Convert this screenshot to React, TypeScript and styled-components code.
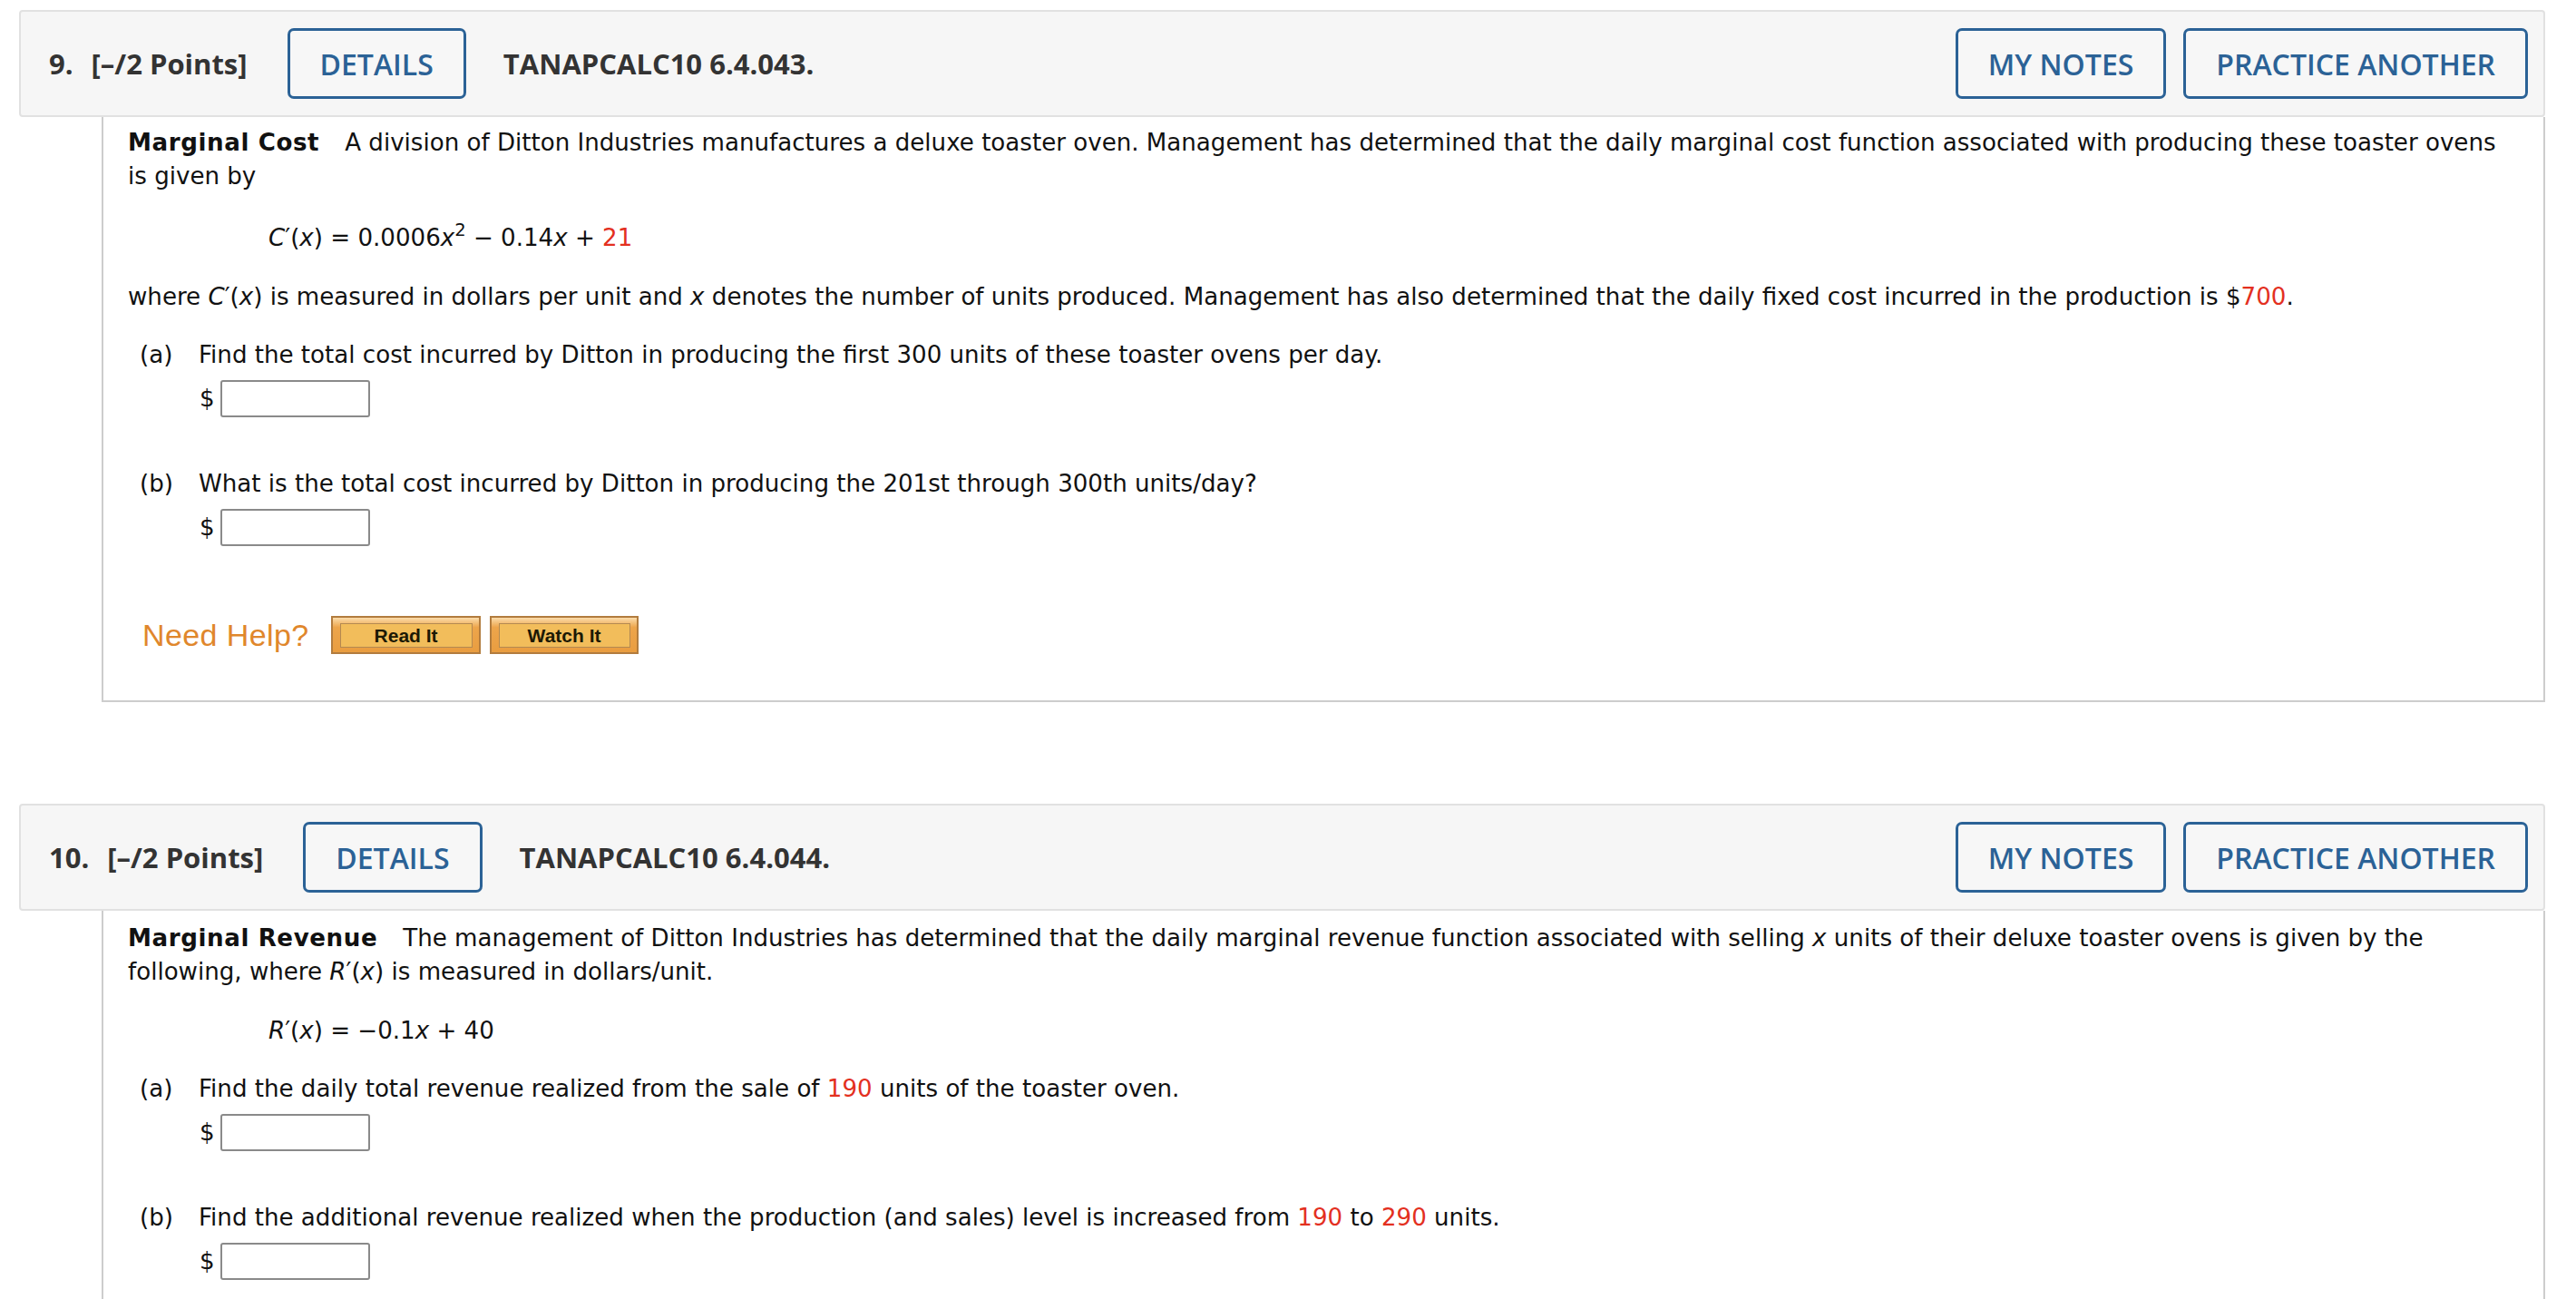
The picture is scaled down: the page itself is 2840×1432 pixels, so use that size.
import React from "react";
import styled, { createGlobalStyle } from "styled-components";

const Global = createGlobalStyle`
  html, body { margin: 0; padding: 0; background: #ffffff; overflow: hidden; }
  body { font-family: "DejaVu Sans", Verdana, sans-serif; color: #111; }
`;

const Page = styled.div`
  padding: 11px 34px 0 21px;
`;

const Question = styled.section`
  margin-bottom: 112px;
`;

const QHeader = styled.header`
  display: flex;
  align-items: center;
  background: #f6f6f6;
  border: 2px solid #e1e1e1;
  border-radius: 4px;
  padding: 18px 17px 18px 31px;
  font-family: "Open Sans", "Liberation Sans", sans-serif;
  font-weight: 700;
  font-size: 31px;
  color: #333;
`;

const QNum = styled.span`
  margin-right: 20px;
`;

const Points = styled.span`
  margin-right: 44px;
`;

const Code = styled.span`
  margin-left: 41px;
  flex: 1;
`;

const OutlineButton = styled.button<{ $ml?: number }>`
  height: 78px;
  padding: 0 33px;
  margin-left: ${(p) => p.$ml ?? 0}px;
  border: 3px solid #2b6296;
  border-radius: 7px;
  background: #f7f7f7;
  color: #2b6296;
  font-family: "Open Sans", "Liberation Sans", sans-serif;
  font-weight: 600;
  font-size: 32px;
  cursor: pointer;
`;

const QBody = styled.div<{ $pb: number }>`
  margin-left: 91px;
  border-left: 2px solid #cdcdcd;
  border-right: 2px solid #cdcdcd;
  border-bottom: 2px solid #cdcdcd;
  padding: 10px 36px ${(p) => p.$pb}px 27px;
  font-size: 26.1px;
  line-height: 37px;
`;

const Para = styled.p<{ $mt?: number }>`
  margin: ${(p) => p.$mt ?? 27}px 0 0 0;
`;

const Lead = styled.b`
  font-weight: 700;
  letter-spacing: 0.6px;
  margin-right: 28px;
`;

const Formula = styled.div<{ $mt?: number }>`
  margin: ${(p) => p.$mt ?? 27}px 0 0 155px;
  white-space: nowrap;
`;

const Sup = styled.sup`
  font-size: 0.75em;
  line-height: 0;
  vertical-align: 0.55em;
`;

const Var = styled.i`
  font-style: italic;
`;

const Red = styled.span`
  color: #e3301f;
`;

const Part = styled.div<{ $mt?: number }>`
  margin: ${(p) => p.$mt ?? 27}px 0 0 13px;
  display: flex;
`;

const PartLabel = styled.span`
  width: 65px;
  flex: none;
`;

const AnswerRow = styled.div<{ $mb: number }>`
  display: flex;
  align-items: center;
  margin: 9px 0 ${(p) => p.$mb}px 79px;
  gap: 6px;
`;

const Dollar = styled.span`
  font-size: 26.1px;
`;

const AnswerInput = styled.input`
  box-sizing: border-box;
  width: 165px;
  height: 41px;
  border: 2px solid #8a8a8a;
  border-radius: 3px;
  background: #fff;
  padding: 0 8px;
  font-size: 24px;
`;

const HelpRow = styled.div`
  display: flex;
  align-items: center;
  margin-left: 16px;
`;

const NeedHelp = styled.span`
  font-family: "Liberation Sans", Arial, sans-serif;
  font-size: 34px;
  color: #e0872c;
  margin-right: 24px;
  letter-spacing: 0.4px;
`;

const HelpButton = styled.button<{ $w: number }>`
  box-sizing: border-box;
  width: ${(p) => p.$w}px;
  height: 42px;
  margin-right: 10px;
  padding: 6px 7px 5px 8px;
  border: 2px solid #b27c3e;
  background: linear-gradient(#fbdcaa 0%, #eda54b 28%, #e99d40 100%);
  display: flex;
  cursor: pointer;
`;

const HelpInner = styled.span`
  flex: 1;
  border: 1px solid #b48951;
  background: #f2bd5b;
  display: flex;
  align-items: center;
  justify-content: center;
  font-family: "Liberation Sans", Arial, sans-serif;
  font-weight: 700;
  font-size: 21px;
  color: #1c1905;
`;

type HeaderProps = { num: string; code: string };

const Header: React.FC<HeaderProps> = ({ num, code }) => (
  <QHeader>
    <QNum>{num}</QNum>
    <Points>[–/2 Points]</Points>
    <OutlineButton>DETAILS</OutlineButton>
    <Code>{code}</Code>
    <OutlineButton>MY NOTES</OutlineButton>
    <OutlineButton $ml={19}>PRACTICE ANOTHER</OutlineButton>
  </QHeader>
);

const Answer: React.FC<{ mb: number }> = ({ mb }) => (
  <AnswerRow $mb={mb}>
    <Dollar>$</Dollar>
    <AnswerInput type="text" aria-label="answer" />
  </AnswerRow>
);

const Help: React.FC = () => (
  <HelpRow>
    <NeedHelp>Need Help?</NeedHelp>
    <HelpButton $w={165}>
      <HelpInner>Read It</HelpInner>
    </HelpButton>
    <HelpButton $w={164}>
      <HelpInner>Watch It</HelpInner>
    </HelpButton>
  </HelpRow>
);

export default function App() {
  return (
    <>
      <Global />
      <Page>
        <Question>
          <Header num="9." code="TANAPCALC10 6.4.043." />
          <QBody $pb={51}>
            <Para $mt={0}>
              <Lead>Marginal Cost</Lead>A division of Ditton Industries manufactures a deluxe toaster
              oven. Management has determined that the daily marginal cost function associated with
              producing these toaster ovens is given by
            </Para>
            <Formula $mt={31}>
              <Var>C</Var>′(<Var>x</Var>) = 0.0006<Var>x</Var>
              <Sup>2</Sup> − 0.14<Var>x</Var> + <Red>21</Red>
            </Formula>
            <Para $mt={28}>
              where <Var>C</Var>′(<Var>x</Var>) is measured in dollars per unit and <Var>x</Var>{" "}
              denotes the number of units produced. Management has also determined that the daily
              fixed cost incurred in the production is $<Red>700</Red>.
            </Para>
            <Part>
              <PartLabel>(a)</PartLabel>
              <span>Find the total cost incurred by Ditton in producing the first 300 units of these toaster ovens per day.</span>
            </Part>
            <Answer mb={55} />
            <Part $mt={0}>
              <PartLabel>(b)</PartLabel>
              <span>What is the total cost incurred by Ditton in producing the 201st through 300th units/day?</span>
            </Part>
            <Answer mb={77} />
            <Help />
          </QBody>
        </Question>
        <Question>
          <Header num="10." code="TANAPCALC10 6.4.044." />
          <QBody $pb={51}>
            <Para $mt={2}>
              <Lead>Marginal Revenue</Lead>The management of Ditton Industries has determined that
              the daily marginal revenue function associated with selling <Var>x</Var> units of their
              deluxe toaster ovens is given by the following, where <Var>R</Var>′(<Var>x</Var>) is
              measured in dollars/unit.
            </Para>
            <Formula $mt={28}>
              <Var>R</Var>′(<Var>x</Var>) = −0.1<Var>x</Var> + 40
            </Formula>
            <Part>
              <PartLabel>(a)</PartLabel>
              <span>
                Find the daily total revenue realized from the sale of <Red>190</Red> units of the
                toaster oven.
              </span>
            </Part>
            <Answer mb={55} />
            <Part $mt={0}>
              <PartLabel>(b)</PartLabel>
              <span>
                Find the additional revenue realized when the production (and sales) level is
                increased from <Red>190</Red> to <Red>290</Red> units.
              </span>
            </Part>
            <Answer mb={77} />
            <Help />
          </QBody>
        </Question>
      </Page>
    </>
  );
}
